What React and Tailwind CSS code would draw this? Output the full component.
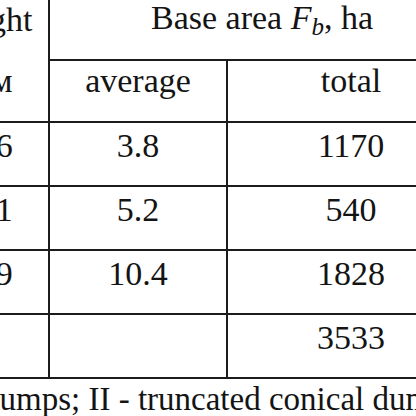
export default function App() {
  const rows = [
    { h: "12.6", avg: "3.8", total: "1170" },
    { h: "20.1", avg: "5.2", total: "540" },
    { h: "25.9", avg: "10.4", total: "1828" },
    { h: "", avg: "", total: "3533" },
  ];

  return (
    <div className="w-[416px] h-[416px] overflow-hidden bg-white text-[#141414] font-['Liberation_Serif','Times_New_Roman',serif] text-[34px]">
      <div className="ml-[-60px] mt-[-2px] w-[534px]">
        {/* header */}
        <div className="flex border-b-2 border-[#1c1c1c]">
          <div className="w-[110px] h-[123px] shrink-0 border-r-2 border-[#1c1c1c] pr-[30px] text-center">
            <div className="pt-[2px] pr-[26px] leading-[40px] whitespace-nowrap">Height</div>
            <div className="mt-[21px] pl-[4px] leading-[40px] whitespace-nowrap">H, м</div>
          </div>
          <div className="flex-1 flex flex-col">
            <div className="h-[63px] border-b-2 border-[#1c1c1c] text-center leading-[40px]">
              Base area <i>F</i>
              <sub className="text-[25px] italic">b</sub>, ha
            </div>
            <div className="h-[60px] flex">
              <div className="w-[178px] shrink-0 border-r-2 border-[#1c1c1c] text-center leading-[40px]">
                average
              </div>
              <div className="flex-1 text-center leading-[40px]">total</div>
            </div>
          </div>
        </div>

        {/* body */}
        {rows.map((row, i) => (
          <div key={i} className="flex h-[64px] border-b-2 border-[#1c1c1c]">
            <div className="w-[110px] shrink-0 border-r-2 border-[#1c1c1c] pr-[22px] pt-[3px] text-center leading-[40px]">
              {row.h}
            </div>
            <div className="w-[178px] shrink-0 border-r-2 border-[#1c1c1c] pt-[3px] text-center leading-[40px]">
              {row.avg}
            </div>
            <div className="flex-1 pt-[3px] text-center leading-[40px]">
              {row.total}
            </div>
          </div>
        ))}
      </div>

      <div className="ml-[-17px] whitespace-nowrap text-[33px] leading-[40px]">
        dumps; II - truncated conical dumps
      </div>
    </div>
  );
}
